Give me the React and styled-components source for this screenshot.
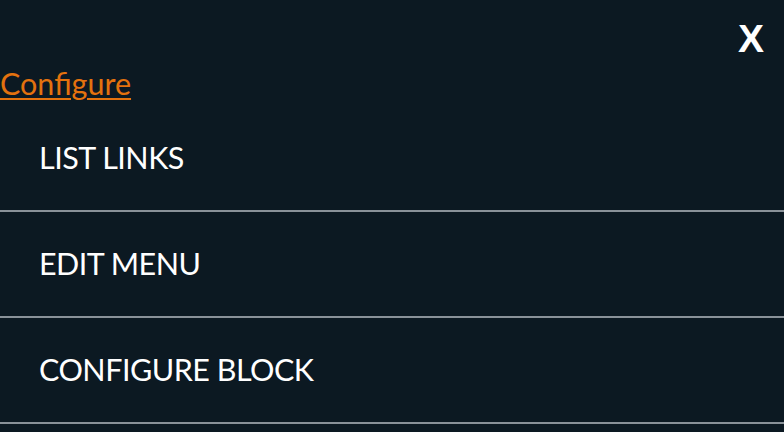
import React from "react";
import styled, { createGlobalStyle } from "styled-components";

const Global = createGlobalStyle`
  html, body { margin: 0; padding: 0; background: #0c1922; }
  body { font-family: Lato, "Open Sans", sans-serif; }
`;

const Panel = styled.nav`
  display: flex;
  flex-direction: column;
  background: #0c1922;
  min-height: 432px;
`;

const TopBar = styled.div`
  display: flex;
  justify-content: flex-end;
  padding: 19px 20px 0 0;
`;

const CloseButton = styled.button`
  background: none;
  border: 0;
  padding: 0;
  margin: 0;
  color: #ffffff;
  font-family: "Liberation Sans", Arial, sans-serif;
  font-weight: 700;
  font-size: 39px;
  line-height: 39px;
  cursor: pointer;
`;

const ConfigureLink = styled.a`
  align-self: flex-start;
  margin-top: 7px;
  color: #e4720e;
  font-family: Lato, sans-serif;
  font-size: 30.5px;
  line-height: 36px;
  text-decoration: underline;
  text-decoration-thickness: 2px;
  text-underline-offset: 3px;
`;

const Menu = styled.ul`
  list-style: none;
  margin: 5px 0 0;
  padding: 0;
`;

const Item = styled.li`
  display: flex;
  align-items: center;
  box-sizing: border-box;
  height: 106px;
  padding: 0 0 3px 39px;
  border-bottom: 2px solid #8a9299;
  color: #ffffff;
  font-family: Lato, sans-serif;
  font-size: 30.5px;
  letter-spacing: -0.5px;
  text-transform: uppercase;
`;

const items = ["List links", "Edit menu", "Configure block"];

export default function App() {
  return (
    <>
      <Global />
      <Panel>
        <TopBar>
          <CloseButton aria-label="Close">X</CloseButton>
        </TopBar>
        <ConfigureLink href="#">Configure</ConfigureLink>
        <Menu>
          {items.map((t) => (
            <Item key={t}>{t}</Item>
          ))}
        </Menu>
      </Panel>
    </>
  );
}
